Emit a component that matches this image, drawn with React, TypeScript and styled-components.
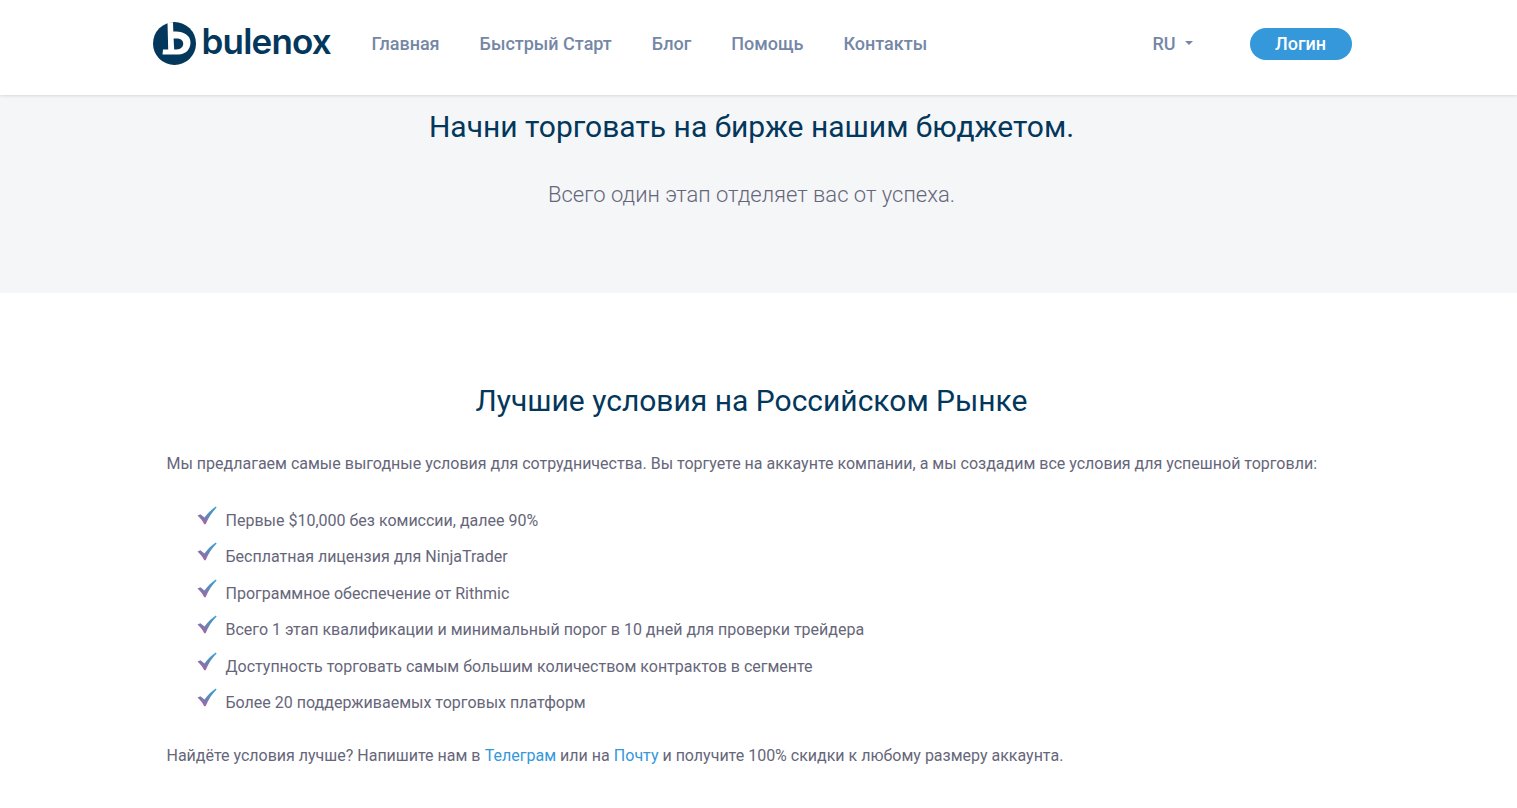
import React from 'react'
import styled, { createGlobalStyle } from 'styled-components'

const navItems = ['Главная', 'Быстрый Старт', 'Блог', 'Помощь', 'Контакты']

const conditions = [
  'Первые $10,000 без комиссии, далее 90%',
  'Бесплатная лицензия для NinjaTrader',
  'Программное обеспечение от Rithmic',
  'Всего 1 этап квалификации и минимальный порог в 10 дней для проверки трейдера',
  'Доступность торговать самым большим количеством контрактов в сегменте',
  'Более 20 поддерживаемых торговых платформ',
]

function LogoMark() {
  return (
    <svg width="43" height="43" viewBox="0 0 43 43" aria-hidden="true">
      <circle cx="21.5" cy="21.5" r="21.5" fill="#03375b" />
      <path d="M14.5 0.3 L20 0.3 L20.3 9.5 L23 9.5 C31 9.5 37.5 13.5 37.5 20.5 C37.5 27.5 32.5 32.5 25.5 32.5 L9.5 32.5 L10 27.5 L15.2 27.5 Z" fill="#fff" />
      <path d="M20.6 16.5 L24 16.5 C27.8 16.5 30.2 18.6 30.2 21.8 C30.2 25 27.5 27.5 23.5 27.5 L21.2 27.5 Z" fill="#03375b" />
    </svg>
  )
}

function Check({ id }: { id: string }) {
  return (
    <CheckIcon width="20" height="20" viewBox="0 0 20 20" aria-hidden="true">
      <defs>
        <linearGradient id={id} x1="0.9" y1="0" x2="0.25" y2="1">
          <stop offset="0" stopColor="#3aa0d8" />
          <stop offset="0.5" stopColor="#5f8ab4" />
          <stop offset="1" stopColor="#ab5fa8" />
        </linearGradient>
      </defs>
      <path d="M0.5 9.4 L3.4 8.2 L7.5 11.6 C10.5 7.4 14.2 3.6 18.8 0.6 L19.6 1.6 C15.2 6 11.6 11.2 8.6 18.2 L7.2 18.2 C5.6 14.6 3.2 11.8 0.5 9.4 Z" fill={`url(#${id})`} />
    </CheckIcon>
  )
}

export default function App() {
  return (
    <>
      <GlobalStyle />
      <Header>
        <HeaderInner>
          <Logo href="#">
            <LogoMark />
            <LogoText>bulenox</LogoText>
          </Logo>
          <Nav>
            {navItems.map(item => (
              <NavLink href="#" key={item}>
                {item}
              </NavLink>
            ))}
          </Nav>
          <Lang>
            RU
            <Caret />
          </Lang>
          <LoginButton>Логин</LoginButton>
        </HeaderInner>
      </Header>

      <Hero>
        <HeroTitle>Начни торговать на бирже нашим бюджетом.</HeroTitle>
        <HeroSubtitle>Всего один этап отделяет вас от успеха.</HeroSubtitle>
      </Hero>

      <Main>
        <Section>
          <SectionTitle>Лучшие условия на Российском Рынке</SectionTitle>
          <Paragraph>
            Мы предлагаем самые выгодные условия для сотрудничества. Вы торгуете на аккаунте компании, а мы создадим все условия для успешной торговли:
          </Paragraph>
          <CheckList>
            {conditions.map((text, i) => (
              <CheckItem key={text}>
                <Check id={`check-${i}`} />
                {text}
              </CheckItem>
            ))}
          </CheckList>
          <Paragraph>
            Найдёте условия лучше? Напишите нам в <TextLink href="#">Телеграм</TextLink> или на <TextLink href="#">Почту</TextLink> и получите 100% скидки к любому размеру аккаунта.
          </Paragraph>
        </Section>
      </Main>
    </>
  )
}

const GlobalStyle = createGlobalStyle`
  html, body {
    margin: 0;
    padding: 0;
    background: #fff;
    overflow: hidden;
  }
  body {
    font-family: Roboto, 'Liberation Sans', sans-serif;
    color: #66667a;
  }
  * {
    box-sizing: border-box;
  }
`

// the original page keeps a scrollbar gutter, so content sits 14px left of centre
const Header = styled.header`
  position: relative;
  height: 95px;
  padding: 0 14px 7px 0;
  background: #fff;
  box-shadow: 0 1px 3px rgba(0, 0, 0, 0.12);
`

const HeaderInner = styled.div`
  width: 1200px;
  height: 100%;
  margin: 0 auto;
  display: flex;
  align-items: center;
`

const Logo = styled.a`
  display: flex;
  align-items: center;
  gap: 6px;
  width: 219px;
  margin: -2px 0 0 1px;
  text-decoration: none;
`

const LogoText = styled.span`
  font-family: Inter, sans-serif;
  font-size: 35px;
  font-weight: 600;
  line-height: 1;
  letter-spacing: -0.8px;
  color: #03375b;
  margin-top: -3px;
`

const Nav = styled.nav`
  display: flex;
  gap: 40px;
  flex: 1;
  margin-bottom: 2px;
`

const NavLink = styled.a`
  font-size: 18px;
  font-weight: 500;
  color: #7587a6;
  text-decoration: none;
`

const Lang = styled.div`
  display: flex;
  align-items: center;
  gap: 9px;
  margin: 0 57px 2px 0;
  font-size: 18px;
  font-weight: 500;
  color: #7587a6;
`

const Caret = styled.span`
  width: 0;
  height: 0;
  border-left: 4px solid transparent;
  border-right: 4px solid transparent;
  border-top: 4px solid #7587a6;
`

const LoginButton = styled.button`
  width: 102px;
  height: 32px;
  border: 0;
  border-radius: 16px;
  background: #3498db;
  color: #fff;
  font-family: inherit;
  font-size: 18px;
  font-weight: 500;
  padding: 0 0 2px;
`

const Hero = styled.section`
  height: 198px;
  padding: 13px 14px 0 0;
  background: #f5f6f8;
  text-align: center;
`

const HeroTitle = styled.h1`
  margin: 0;
  font-size: 30px;
  font-weight: 400;
  line-height: 38px;
  color: #03375b;
`

const HeroSubtitle = styled.p`
  margin: 35px 0 0;
  font-size: 22px;
  font-weight: 300;
  line-height: 28px;
  color: #66667a;
`

const Main = styled.main`
  padding-right: 14px;
`

const Section = styled.section`
  width: 1200px;
  margin: 0 auto;
  padding: 89px 15px 0;
`

const SectionTitle = styled.h2`
  margin: 0 0 32px;
  font-size: 30px;
  font-weight: 400;
  line-height: 38px;
  text-align: center;
  color: #03375b;
`

const Paragraph = styled.p`
  margin: 0;
  font-size: 16px;
  line-height: 24px;
`

const CheckList = styled.ul`
  list-style: none;
  margin: 32.6px 0 16.4px;
  padding: 0 0 0 31px;
`

const CheckItem = styled.li`
  position: relative;
  height: 36.5px;
  padding-left: 28px;
  font-size: 16px;
  line-height: 24px;
`

const CheckIcon = styled.svg`
  position: absolute;
  left: -1px;
  top: -3px;
`

const TextLink = styled.a`
  margin-left: 0.3px;
  color: #3498db;
  text-decoration: none;
`
